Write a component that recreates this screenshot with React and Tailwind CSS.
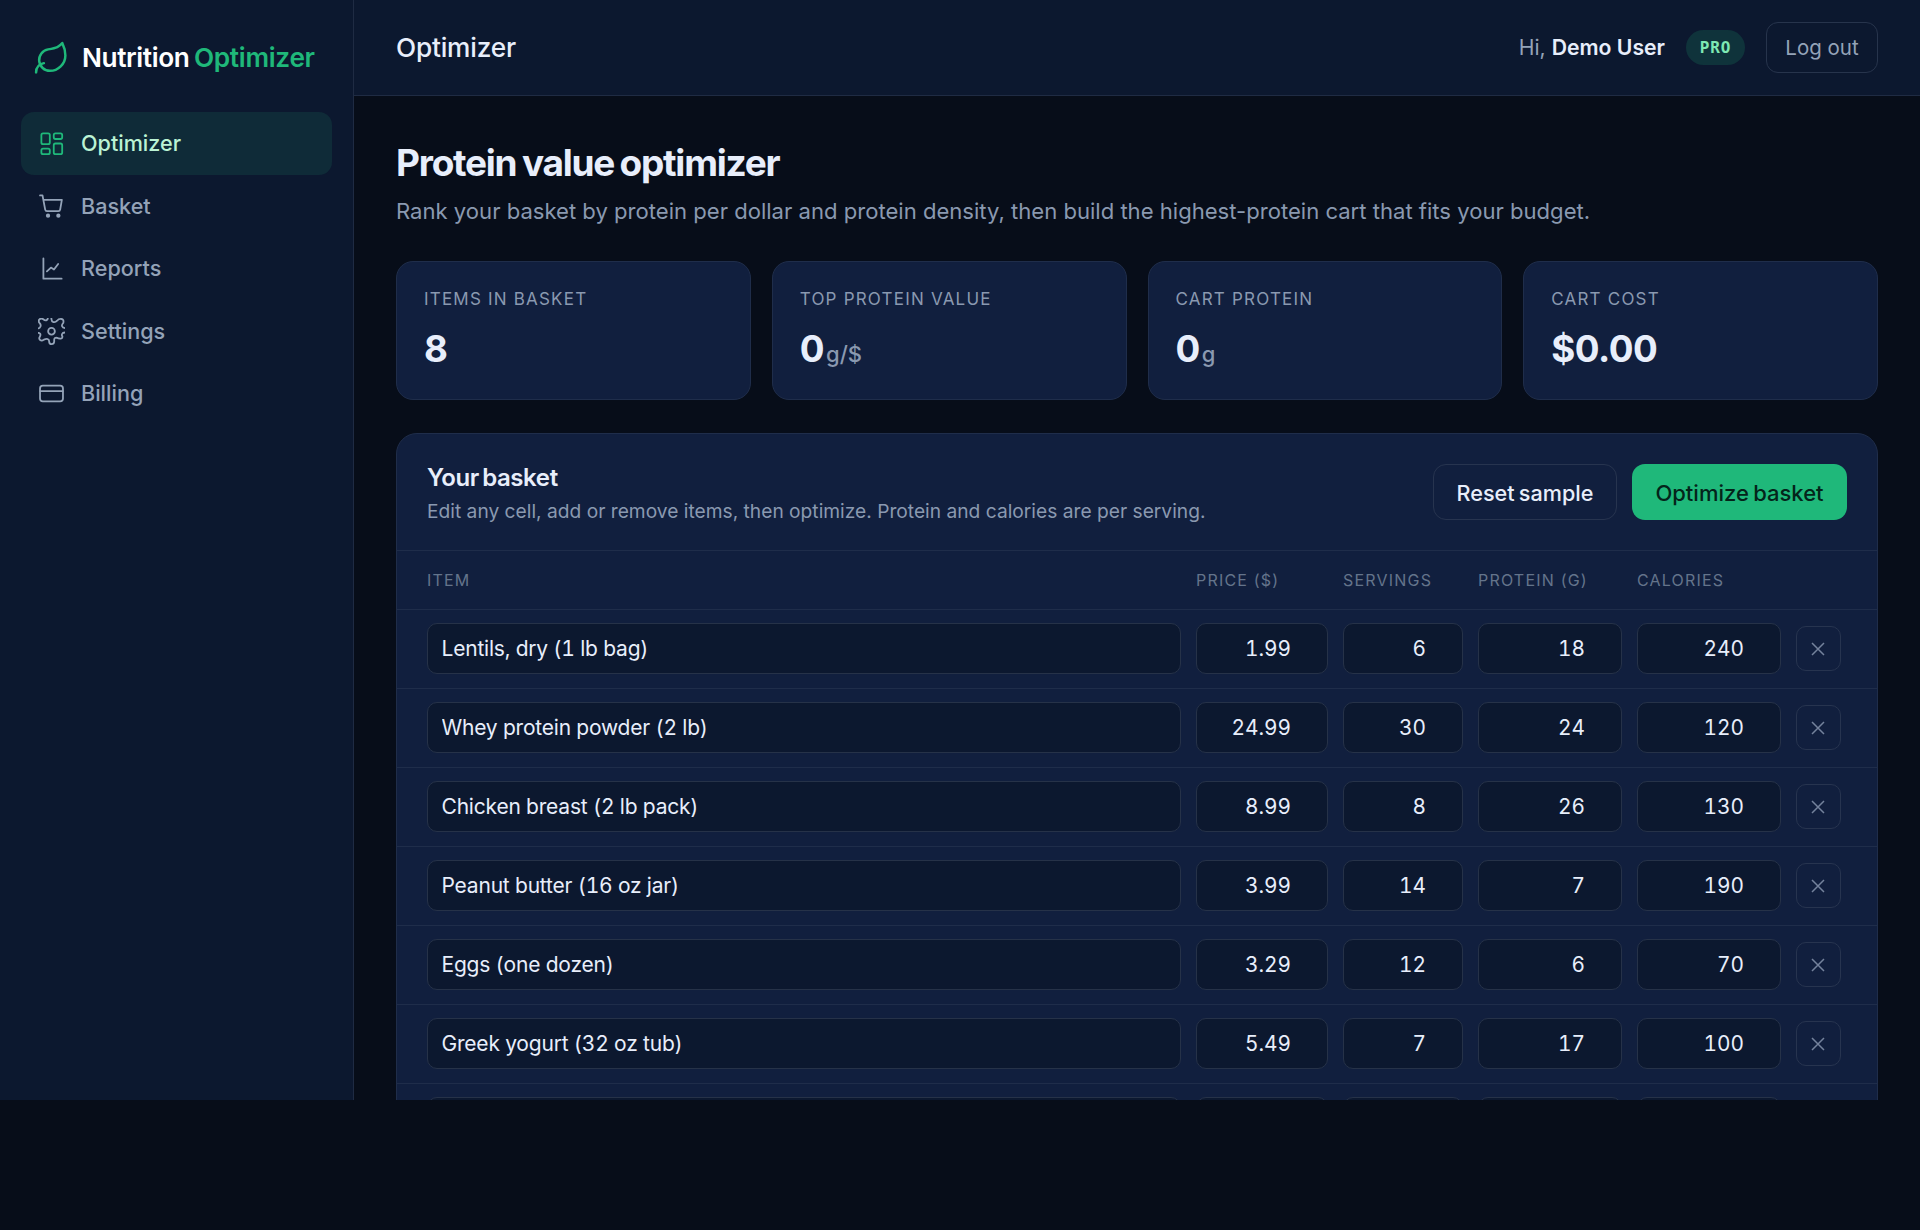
import React, { useState } from 'react';

const navItems = [
  { label: 'Optimizer', icon: 'grid' },
  { label: 'Basket', icon: 'cart' },
  { label: 'Reports', icon: 'chart' },
  { label: 'Settings', icon: 'gear' },
  { label: 'Billing', icon: 'card' },
];

const sampleItems = [
  { id: 1, name: 'Lentils, dry (1 lb bag)', price: '1.99', servings: 6, protein: 18, calories: 240 },
  { id: 2, name: 'Whey protein powder (2 lb)', price: '24.99', servings: 30, protein: 24, calories: 120 },
  { id: 3, name: 'Chicken breast (2 lb pack)', price: '8.99', servings: 8, protein: 26, calories: 130 },
  { id: 4, name: 'Peanut butter (16 oz jar)', price: '3.99', servings: 14, protein: 7, calories: 190 },
  { id: 5, name: 'Eggs (one dozen)', price: '3.29', servings: 12, protein: 6, calories: 70 },
  { id: 6, name: 'Greek yogurt (32 oz tub)', price: '5.49', servings: 7, protein: 17, calories: 100 },
  { id: 7, name: '', price: '', servings: '', protein: '', calories: '' },
];

const stats = [
  { label: 'ITEMS IN BASKET', value: '8' },
  { label: 'TOP PROTEIN VALUE', value: '0', unit: 'g/$' },
  { label: 'CART PROTEIN', value: '0', unit: 'g' },
  { label: 'CART COST', value: '$0.00' },
];

const NavIcon = ({ name }) => (
  <svg
    viewBox="0 0 24 24"
    fill="none"
    stroke="currentColor"
    strokeWidth="1.6"
    strokeLinecap="round"
    strokeLinejoin="round"
    className="block w-[27px] h-[27px] shrink-0 overflow-hidden"
  >
    {name === 'grid' && (
      <>
        <rect x="3" y="3" width="7.5" height="9.5" rx="1.5" />
        <rect x="14" y="3" width="7.5" height="5" rx="1.5" />
        <rect x="14" y="12" width="7.5" height="9.5" rx="1.5" />
        <rect x="3" y="16.5" width="7.5" height="5" rx="1.5" />
      </>
    )}
    {name === 'cart' && (
      <>
        <path d="M1.8 3H4l2.4 12.7A1.6 1.6 0 0 0 8 17h10.1a1.6 1.6 0 0 0 1.6-1.3L21.2 7H4.8" />
        <circle cx="8.9" cy="21" r="1.1" fill="currentColor" />
        <circle cx="18.1" cy="21" r="1.1" fill="currentColor" />
      </>
    )}
    {name === 'chart' && (
      <>
        <path d="M4.8 3v18H21" />
        <path d="M7.9 14.5 11.5 11.2l2.7 1.7L17.9 8" />
      </>
    )}
    {name === 'gear' && (
      <>
        <circle cx="12" cy="11.8" r="3" />
        <path d="M0 9.2Q1.6 9.4 2.2 7.6T1.5 4.7Q-.2 2.6 1.3 1.2T4.7 1.1Q6.4 2.6 7.7 1.9T8.7-.8" />
        <path d="M11.9-.8V.9Q12 3.1 13.7 3.6T17 2.4Q18.4.6 20.8.9T22.5 4.3Q20.9 5.9 21.4 7.4T24 9" />
        <path d="M24 12.9Q21.900 13 21.4 14.2T21.7 16.3Q21.8 18.6 19.8 18.4T16.9 17.6Q14.5 17.3 14.4 19.3V21Q14.2 23.2 12.1 23.2T9.9 21Q10 19 8.6 18.7T5.3 19.2Q3.3 20.8 1.9 19.6T1.5 16.8Q2.7 14.9 1.8 13.9T0 13.3" />
      </>
    )}
    {name === 'card' && (
      <>
        <rect x="1.8" y="5" width="20.4" height="14" rx="2.5" />
        <path d="M2 9.8h20" />
      </>
    )}
  </svg>
);

const Sidebar = () => (
  <aside className="w-[354px] shrink-0 bg-[#0c182f] border-r border-[#1f2b43] px-[21px]">
    <div className="flex items-center h-[112px] pt-[4px] pl-[12px]">
      <svg
        viewBox="0 0 24 24"
        fill="none"
        stroke="#1fb87a"
        strokeWidth="1.6"
        strokeLinecap="round"
        strokeLinejoin="round"
        className="w-[37px] h-[37px] shrink-0"
      >
        <path d="M11 20A7 7 0 0 1 9.8 6.1C15.5 5 17 4.48 19 2c1 2 2 4.18 2 8 0 5.5-4.78 10-10 10Z" />
        <path d="M2 21c0-3 1.85-5.36 5.08-6" />
      </svg>
      <span className="ml-[12px] text-[26.25px] font-semibold tracking-[-0.4px] text-white whitespace-nowrap">
        Nutrition<span className="text-[#1fb87a] ml-[4.5px] tracking-[-0.3px]">Optimizer</span>
      </span>
    </div>
    <nav>
      {navItems.map((item, i) => (
        <a
          key={item.label}
          className={
            i === 0
              ? 'flex items-center gap-[16px] h-[62.6px] px-[17px] rounded-[13px] bg-[#0f2b38] text-[#bbf3d4] text-[21.6px] font-medium'
              : 'flex items-center gap-[16px] h-[62.6px] px-[17px] rounded-[13px] text-[#94a3b8] text-[21.6px] font-medium'
          }
        >
          <span className={i === 0 ? 'text-[#1fb87a]' : ''}>
            <NavIcon name={item.icon} />
          </span>
          {item.label}
        </a>
      ))}
    </nav>
  </aside>
);

const Header = () => (
  <header className="flex items-center justify-between h-[96px] shrink-0 bg-[#0c182f] border-b border-[#1f2b43] px-[42px]">
    <div className="text-[26.25px] font-medium tracking-[-0.2px] text-[#e8eefb]">Optimizer</div>
    <div className="flex items-center">
      <span className="text-[21.2px] text-[#94a3b8]">
        Hi, <span className="font-semibold text-[#e8eefb]">Demo User</span>
      </span>
      <span className="ml-[21px] w-[59px] h-[35px] flex items-center justify-center rounded-full bg-[#0f333b] text-[#7ee8b4] text-[16px] font-bold tracking-[0.8px] font-['DejaVu_Sans_Mono',monospace]">
        PRO
      </span>
      <button className="ml-[21px] w-[112px] h-[51px] pt-[2px] rounded-[12px] border border-[#27344c] text-[20.5px] text-[#94a3b8]">
        Log out
      </button>
    </div>
  </header>
);

const cellClass =
  'h-[51px] w-full min-w-0 rounded-[10px] border border-[#263248] bg-[#0c182f] tabular-nums text-[#e8eefb] focus:outline-none';
const numberClass = 'pl-[14px] pr-[36px] text-right text-[20.8px]';
const rowGrid = 'grid grid-cols-[1fr_132px_120px_144px_144px_45px] gap-x-[15px] items-center pl-[30px] pr-[36px]';

const BasketRow = ({ item, onRemove }) => (
  <div className={`${rowGrid} h-[79px] pb-px border-b border-[#1f2d4a]`}>
    <input className={`${cellClass} px-[13.5px] text-[21px] tracking-[-0.2px]`} defaultValue={item.name} />
    <input className={`${cellClass} ${numberClass}`} defaultValue={item.price} />
    <input className={`${cellClass} ${numberClass}`} defaultValue={item.servings} />
    <input className={`${cellClass} ${numberClass}`} defaultValue={item.protein} />
    <input className={`${cellClass} ${numberClass}`} defaultValue={item.calories} />
    <button
      onClick={() => onRemove(item.id)}
      className="w-[45px] h-[45px] flex items-center justify-center rounded-[10px] border border-[#27344f] text-[#74829c]"
    >
      <svg viewBox="0 0 14 14" fill="none" stroke="currentColor" strokeWidth="1.5" className="w-[14px] h-[14px] mr-px">
        <path d="M1 1l12 12M13 1L1 13" />
      </svg>
    </button>
  </div>
);

const App = () => {
  const [items, setItems] = useState(sampleItems);

  const handleRemove = (id) => {
    setItems(items.filter((item) => item.id !== id));
  };

  return (
    <div className="h-[1230px] bg-[#070d19] font-['Inter',sans-serif]">
      <div className="flex h-[1100px] overflow-hidden">
        <Sidebar />
        <div className="flex-1 min-w-0">
          <Header />
          <main className="px-[42px] pt-[42px]">
            <h1 className="text-[37px] leading-[50px] font-bold tracking-[-1.25px] [word-spacing:-2px] text-[#e8eefb]">
              Protein value optimizer
            </h1>
            <p className="mt-[6px] text-[22.08px] leading-[34px] text-[#8a99b0]">
              Rank your basket by protein per dollar and protein density, then build the highest-protein cart that fits
              your budget.
            </p>
            <div className="grid grid-cols-4 gap-[21px] mt-[33px]">
              {stats.map((stat) => (
                <div key={stat.label} className="h-[139px] rounded-[17px] border border-[#1f2d4a] bg-[#111f3e] px-[27px] pt-[24px]">
                  <div className="text-[17px] leading-[27px] tracking-[1.2px] text-[#8a99b0]">{stat.label}</div>
                  <div className="mt-[11px] text-[36.75px] leading-[50px] font-bold tracking-[-0.5px] text-[#e8eefb]">
                    {stat.value}
                    {stat.unit && (
                      <span className="ml-[2px] text-[22px] font-medium tracking-normal text-[#8a99b0]">{stat.unit}</span>
                    )}
                  </div>
                </div>
              ))}
            </div>

            <section className="mt-[33px] rounded-t-[21px] border border-[#1f2d4a] bg-[#111f3e]">
              <div className="flex items-center justify-between h-[117px] px-[30px] border-b border-[#1f2d4a]">
                <div className="pt-[5px]">
                  <h2 className="text-[24px] leading-[34px] font-semibold tracking-[-0.4px] [word-spacing:-2.5px] text-[#e8eefb]">
                    Your basket
                  </h2>
                  <p className="text-[19.2px] leading-[33px] text-[#8a99b0]">
                    Edit any cell, add or remove items, then optimize. Protein and calories are per serving.
                  </p>
                </div>
                <div className="flex gap-[15px]">
                  <button
                    onClick={() => setItems(sampleItems)}
                    className="w-[184px] h-[56px] pt-[3px] rounded-[13px] border border-[#27344f] text-[21.6px] font-medium [word-spacing:-1.5px] text-[#e8eefb]"
                  >
                    Reset sample
                  </button>
                  <button className="w-[215px] h-[56px] pt-[3px] rounded-[13px] bg-[#1fb87a] text-[22px] font-medium [word-spacing:-1.5px] text-[#04241a]">
                    Optimize basket
                  </button>
                </div>
              </div>
              <div className={`${rowGrid} h-[59px] border-b border-[#1f2d4a] text-[16px] tracking-[1.2px] text-[#64748b]`}>
                <div>ITEM</div>
                <div>PRICE ($)</div>
                <div>SERVINGS</div>
                <div className="whitespace-nowrap">PROTEIN (G)</div>
                <div>CALORIES</div>
              </div>
              {items.map((item) => (
                <BasketRow key={item.id} item={item} onRemove={handleRemove} />
              ))}
            </section>
          </main>
        </div>
      </div>
    </div>
  );
};

export default App;
